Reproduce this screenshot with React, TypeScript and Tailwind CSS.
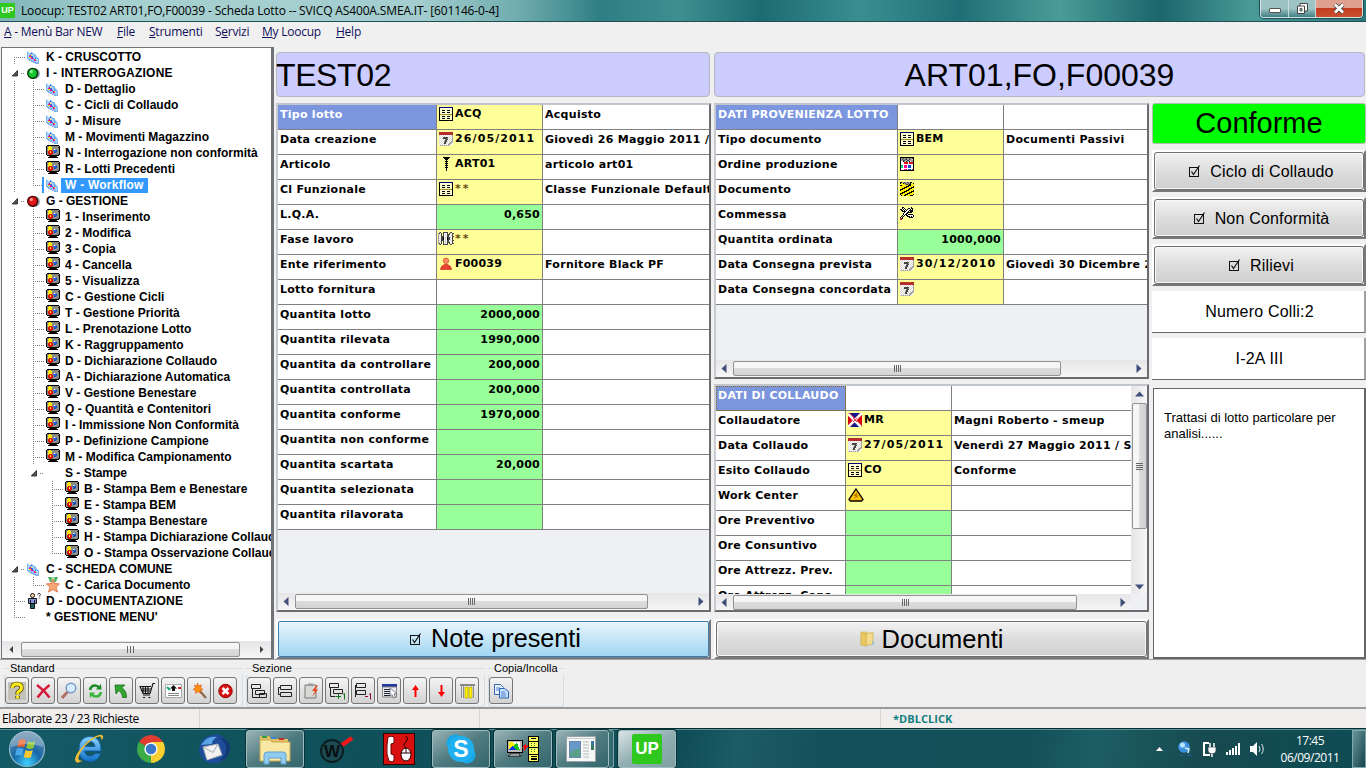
import React from "react";

type Palette = Record<string, string>;

const PALETTE: Palette = {
  k: "#000000", g: "#8b8b83", y: "#ffee00", r: "#e01010", b: "#1450d0", w: "#ffffff", l: "#c4c4c4",
  n: "#000080", d: "#444444", c: "#7fb4f0", o: "#f0a040", m: "#ff0090", e: "#00e080", t: "#b03030",
  u: "#2f6ad8", s: "#a8d4ff", p: "#d9d6cf", v: "#e8c000", a: "#9f9f9f", f: "#8888b8", h: "#108010",
  i: "#ffffd0", q: "#a09030",
};

function Pix({ rows, className = "" }: { rows: string[]; className?: string }) {
  const w = Math.max(...rows.map((r) => r.length));
  return (
    <svg width={w} height={rows.length} viewBox={`0 0 ${w} ${rows.length}`} shapeRendering="crispEdges" className={`shrink-0 ${className}`}>
      {rows.flatMap((row, y) =>
        row.split("").map((ch, x) => (ch === "." ? null : <rect key={`${x}-${y}`} x={x} y={y} width={1} height={1} fill={PALETTE[ch]} />)),
      )}
    </svg>
  );
}

const MONITOR = [
  ".kkkkkkkkkkkk.",
  "kggyyggggggggk",
  "kgyyyyggggggdk",
  "kgyyyygggggggk",
  "kgyyyyggwcgggk",
  "kgyrrrgubbbggk",
  "kgrryrrgubbggk",
  "kgrryrrgbbgggk",
  "kgrrrrrggggggk",
  "kggrrrggggggdk",
  ".kkkkkkkkkkkk.",
  "...dkkkkkkd...",
  "..kkkkkkkkkk..",
];
const NET = [
  "s...........",
  "cs..cs......",
  "csscucs.....",
  "csccssccs...",
  "cscmysscc...",
  "csmmuusccs..",
  "csyymussccs.",
  "ccscmmusuccs",
  ".ccscscmyssc",
  "..ccccsmmssc",
  "....ccccsssc",
  "......ccccsc",
  "........cccc",
];
const FORM = [
  "nnnnnnnnnnnnnn",
  "kiiiiiiiiiiiik",
  "kiiiiiiiiiiiik",
  "kiikkkiikkkiik",
  "kiiiiiiiiiiiik",
  "kiikkkiikkkiik",
  "kiiiiiiiiiiiik",
  "kqqqqqqqqqqqqk",
  "kiiiiiiiiiiiik",
  "kiikkkiikkkiik",
  "kiiiiiiiiiiiik",
  "kiikkkiikkkiik",
  "kiiiiiiiiiiiik",
  "kkkkkkkkkkkkkk",
];
const CAL = [
  "tttttttttttttt",
  "trttrttrttrttt",
  "tttttttttttttt",
  "pwpwpwpwpwpwpa",
  "wpwpwpwpwpwpwa",
  "pwpwdddddwpwpa",
  "wpwpddddapwpwa",
  "pwpwpwaddwpwpa",
  "wpwpwpddwpwpwa",
  "pwpwpaddpwpwaa",
  "wpwpwddwpwpaap",
  "pwpwpddpwpaapw",
  "wpwpwpwpwaapw.",
  "papapapapapw..",
];
const SCREW = [
  "kkkkkkk", ".kkkkk.", "..kkk..", "...k...", "..kkk..", "...k...", "..kkk..",
  "...k...", "..kkk..", "...k...", "..kkk..", "...k...", "...k...", "...k...",
];
const GRIDICON = [
  "kkkkkkkkkkkkkk", "kaadaadaadaadk", "kadaaddaadaapk", "kaaddaaddaaaak", "kwwkaadaakwaak",
  "kwwwrrrrwrrrrk", "kwwwrrrrwrrrrk", "kwwwwwwwwwwwwk", "keewmmmwbbbwwk", "keewmmmwbbbwwk",
  "keewmmmwbbbwwk", "kwwwwwwwwwwwwk", "kwwwmmmwbbbwrk", "kkkkkkkkkkkkkk",
];
const HATCH = [
  "kkaadaadaakk..", "kyykadaadakyyk", ".yyyyaddakkyyy", "kkyyyyyykkkyyy", "yyyyyykkkyyyyk",
  "yyyykkkyyyykkk", "yykkkyyyykkkyy", "kkkyyyyykkyyyy", "kyyyyykkkyyyyk", "yyyykkkyyyykkk",
  "yykkkyyyykkkyy", "kkkyyyykkkyyyy", "kyyyykkkyyyyyk", ".kyykkyyyykkk.",
];
const TOOLS = [
  "..kk.......k..", "..kwk...kk.kk.", "kk.kwk.kwwk.k.", ".kk.kwkwwkkkk.", "..kkkkwwk.kkk.",
  "....kwwkkkkk..", "...kwwkk......", "...kwkkwkkkkk.", "..kwk.kkwwwwwk", ".kvk...kkkwkwk",
  "kwk......kkkk.", "ttk...........", "tr............",
];
const GEAR = [
  ".ad..ddddd..dd..", "adpd.dwpwd.dpwdd", "apwd.dwpwdddwpd.", "awpd.dwpwddpwpd.", "apwdddwpwddwpwdd", "awpddkwpwkddpwd.",
  "apwddkwpwkddwpd.", "awpddkwpwkddpwd.", "apwdddwpwddwpwdd", "awpd.dwpwddpwpd.", "apwd.dwpwdddwpd.", "adpd.dwpwd.dpwdd", ".ad..ddddd..dd..",
];

const Person = () => (
  <svg width="14" height="14" viewBox="0 0 14 14" className="shrink-0">
    <path d="M1.500 12.500q0-3.500 4-5h3q4 1.500 4 5z" fill="#ee4030" stroke="#b02018" strokeWidth=".6" />
    <circle cx="7" cy="3.800" r="2.800" fill="#ff8a60" stroke="#c84020" strokeWidth=".6" />
  </svg>
);
const Flag = () => (
  <svg width="14" height="14" viewBox="0 0 14 14" className="shrink-0">
    <rect width="14" height="14" fill="#d80010" />
    <path d="M2 0h10L7 5zM2 14h10L7 9z" fill="#101890" />
    <path d="M0 1l13 13M14 0L0 14" stroke="#fff" strokeWidth="2.6" />
    <path d="M5 5l4 4M9 5L5 9" stroke="#e04050" strokeWidth="1" />
  </svg>
);
const Warn = () => (
  <svg width="16" height="14" viewBox="0 0 16 14" className="shrink-0">
    <path d="M8 1L15 11.5 13.5 13H2.5L1 11.5z" fill="#ffc400" stroke="#000" strokeWidth="1.300" />
    <path d="M9.500 4L5.500 8h2.500l-2 3L11 7.500H8.500z" fill="#a87000" />
  </svg>
);

const CELL_ICONS: Record<string, React.ReactNode> = {
  form: <Pix rows={FORM} />,
  cal: <Pix rows={CAL} />,
  screw: <Pix rows={SCREW} className="mx-1" />,
  gear: <Pix rows={GEAR} className="-ml-px" />,
  person: <Person />,
  grid: <Pix rows={GRIDICON} />,
  hatch: <Pix rows={HATCH} />,
  tools: <Pix rows={TOOLS} />,
  flag: <Flag />,
  warn: <Warn />,
};

/* ---------- tree ---------- */
type Icon = "net" | "mon" | "green" | "red" | "medal" | "man" | "none";
interface TreeRow { cells: string; icon: Icon; text: string; selected?: boolean }
// cells: "|" line, "+" branch, "L" last branch, "F" first branch, "v" expander, " " blank
const mon = (text: string): TreeRow => ({ cells: "|+", icon: "mon", text });
const TREE: TreeRow[] = [
  { cells: "F", icon: "net", text: "K - CRUSCOTTO" },
  { cells: "v", icon: "green", text: "I - INTERROGAZIONE" },
  { cells: "|+", icon: "net", text: "D - Dettaglio" },
  { cells: "|+", icon: "net", text: "C - Cicli di Collaudo" },
  { cells: "|+", icon: "net", text: "J - Misure" },
  { cells: "|+", icon: "net", text: "M - Movimenti Magazzino" },
  mon("N - Interrogazione non conformità"),
  mon("R - Lotti Precedenti"),
  { cells: "|L", icon: "net", text: "W - Workflow", selected: true },
  { cells: "v", icon: "red", text: "G - GESTIONE" },
  mon("1 - Inserimento"),
  mon("2 - Modifica"),
  mon("3 - Copia"),
  mon("4 - Cancella"),
  mon("5 - Visualizza"),
  mon("C - Gestione Cicli"),
  mon("T - Gestione Priorità"),
  mon("L - Prenotazione Lotto"),
  mon("K - Raggruppamento"),
  mon("D - Dichiarazione Collaudo"),
  mon("A - Dichiarazione Automatica"),
  mon("V - Gestione Benestare"),
  mon("Q - Quantità e Contenitori"),
  mon("I - Immissione Non Conformità"),
  mon("P - Definizione Campione"),
  mon("M - Modifica Campionamento"),
  { cells: "|v", icon: "none", text: "S - Stampe" },
  { cells: "| +", icon: "mon", text: "B - Stampa Bem e Benestare" },
  { cells: "| +", icon: "mon", text: "E - Stampa BEM" },
  { cells: "| +", icon: "mon", text: "S - Stampa Benestare" },
  { cells: "| +", icon: "mon", text: "H - Stampa Dichiarazione Collaudo" },
  { cells: "| L", icon: "mon", text: "O - Stampa Osservazione Collaudo" },
  { cells: "v", icon: "net", text: "C - SCHEDA COMUNE" },
  { cells: "|L", icon: "medal", text: "C - Carica Documento" },
  { cells: "+", icon: "man", text: "D - DOCUMENTAZIONE" },
  { cells: "L", icon: "none", text: "* GESTIONE MENU'" },
];

function Branch({ kind }: { kind: string }) {
  const dash = { stroke: "#808080", strokeWidth: 1, strokeDasharray: "1 1", shapeRendering: "crispEdges" as const };
  return (
    <svg width="19" height="16" viewBox="0 0 19 16" className="shrink-0 overflow-visible">
      {(kind === "|" || kind === "+") && <path d="M9.5 0V16" {...dash} />}
      {kind === "L" && <path d="M9.5 0V8" {...dash} />}
      {kind === "F" && <path d="M9.5 8V16" {...dash} />}
      {"+LF".includes(kind) && <path d="M9 8.5H20" {...dash} />}
      {kind === "v" && (
        <>
          <path d="M16 8.5H20" {...dash} />
          <path d="M12.5 5.5V11H7.2z" fill="#555" stroke="#222" strokeWidth=".8" />
        </>
      )}
    </svg>
  );
}

function Ball({ from, to }: { from: string; to: string }) {
  return (
    <svg width="13" height="13" viewBox="0 0 13 13" className="shrink-0">
      <circle cx="7.2" cy="6.5" r="5.6" fill="#7f8f98" />
      <circle cx="5.6" cy="6.3" r="4.9" fill={from} stroke={to} strokeWidth="1.4" />
      <circle cx="4.4" cy="4.6" r="1.5" fill="#fff" opacity=".6" />
    </svg>
  );
}

function TreeIcon({ icon }: { icon: Icon }) {
  switch (icon) {
    case "net": return <Pix rows={NET} />;
    case "mon": return <Pix rows={MONITOR} className="-mt-1" />;
    case "green": return <Ball from="#18c830" to="#003806" />;
    case "red": return <Ball from="#e01818" to="#480000" />;
    case "medal":
      return (
        <svg width="14" height="16" viewBox="0 0 14 16" className="shrink-0">
          <path d="M2 0h10l-2 5H4z" fill="#4caf60" />
          <path d="M5.5 0h3v5h-3z" fill="#a8e0b0" />
          <path d="M7 2.5l1.8 4 4.7.4-3.5 3.2 1.5 5L7 12.5 2.5 15.100l1.500-5L.5 6.900l4.700-.4z" fill="#f8a878" stroke="#d86838" strokeWidth=".8" />
        </svg>
      );
    case "man":
      return (
        <svg width="15" height="16" viewBox="0 0 15 16" className="shrink-0">
          <circle cx="5.500" cy="2.500" r="2" fill="#f4d4a0" stroke="#000" strokeWidth=".9" />
          <path d="M1.500 5.500h8v5h-8z" fill="#8c94d8" stroke="#000" strokeWidth=".9" />
          <path d="M3.500 7v4M7.500 7v4" stroke="#000" strokeWidth=".8" />
          <path d="M3.500 10.500h4v5h-4z" fill="#206060" stroke="#000" strokeWidth=".9" />
          <path d="M10.500 1.500q0-1 1.500-1t1.500 1q0 1-1.500 1.800M12 4.500v1" fill="none" stroke="#333" />
        </svg>
      );
    default: return null;
  }
}

function TreePanel() {
  return (
    <div className="flex h-[612px] w-[272px] shrink-0 flex-col border border-[#70737a] border-b-2 border-r-2 bg-white pt-px">
      <div className="h-[592px] shrink-0 overflow-hidden">
        {TREE.map((r, i) => (
          <div key={i} className="flex h-4 w-[600px] items-center pl-[3px]">
            {r.cells.split("").map((c, j) => <Branch key={j} kind={c} />)}
            <span className={`flex h-4 w-[22px] shrink-0 items-center ${r.selected ? "-ml-px mr-px border-l-2 border-[#3399ff] pl-[2px]" : "pl-[3px]"}`}>
              <TreeIcon icon={r.icon} />
            </span>
            <span className={`-ml-[4px] h-[15px] whitespace-pre px-1 text-[12px] font-bold leading-[15px] ${r.selected ? "bg-[#3399ff] tracking-[0.02em] text-white" : i === 1 || i === 34 ? "tracking-[0.019em]" : ""}`}>{r.text}</span>
          </div>
        ))}
      </div>
      <HScroll thumb="w-[219px]" arrow="#404040" tree />
    </div>
  );
}

/* ---------- scrollbars ---------- */
const Tri = ({ d, fill }: { d: string; fill: string }) => (
  <svg width="9" height="9" viewBox="0 0 9 9" className="shrink-0"><path d={d} fill={fill} /></svg>
);

function HScroll({ thumb, arrow = "#3f4f78", tree = false }: { thumb: string; arrow?: string; tree?: boolean }) {
  return (
    <div className={`flex h-[17px] shrink-0 items-center bg-gradient-to-b from-[#e6e6e8] to-[#f6f6f6] ${tree ? "pl-[5px] pr-[5px]" : "pl-[4px] pr-[4px]"}`}>
      <Tri d={tree ? "M6 1V8L2.500 4.500z" : "M6.500 0V9L1.500 4.500z"} fill={arrow} />
      <div className={`flex h-[15px] items-center justify-center gap-px rounded-[2px] border border-[#929292] bg-gradient-to-b from-[#f6f6f6] from-45% via-[#dcdcdc] via-50% to-[#d4d4d4] ${tree ? "ml-[5px]" : "ml-1"} ${thumb}`}>
        {(tree ? [0, 1, 2] : [0, 1, 2, 3]).map((i) => <i key={i} className={`h-[7px] w-px bg-[#666] ${tree ? "mr-px" : ""}`} />)}
      </div>
      <span className="flex-1" />
      <Tri d={tree ? "M3 1V8L6.500 4.500z" : "M2.500 0V9L7.500 4.500z"} fill={arrow} />
    </div>
  );
}

/* ---------- tables ---------- */
interface Row { label: string; icon?: string; value?: string; kind?: "y" | "g" | "w"; desc?: string; num?: boolean; stars?: boolean }

function Grid({ rows, labelW, focus = false }: { rows: Row[]; labelW: string; focus?: boolean }) {
  return (
    <div className="shrink-0 font-['DejaVu_Sans',sans-serif] text-[11px] font-bold leading-[20px] text-black">
      {rows.map((r, i) => (
        <div key={i} className="flex h-[25px] w-[700px]">
          <div className={`shrink-0 overflow-hidden whitespace-pre border-b border-r border-[#808080] pl-[2px] tracking-[0.024em] ${labelW} ${i === 0 ? "bg-[#7b96de] text-white" : "bg-white"} ${i === 0 && focus ? "outline-1 -outline-offset-1 outline-dotted outline-[#84691f]" : ""}`}>
            {r.label}
          </div>
          <div className={`flex w-[106px] shrink-0 overflow-hidden whitespace-pre border-b border-r border-[#808080] ${r.kind === "y" ? "bg-[#ffff99]" : r.kind === "g" ? "bg-[#99ff99]" : "bg-white"}`}>
            {r.icon && <span className="flex w-[18px] shrink-0 items-start pl-[2px] pt-[2px]">{CELL_ICONS[r.icon]}</span>}
            <span className={r.num ? "flex-1 pr-[2px] text-right tracking-[0.022em]" : r.stars ? "-mt-px tracking-[0.18em] text-[#6b4a10]" : r.icon === "cal" ? "-mt-px tracking-[0.1em]" : "-mt-px tracking-[0.02em]"}>{r.value}</span>
          </div>
          <div className="flex-1 whitespace-pre border-b border-[#808080] bg-white pl-[2px] tracking-[0.026em]">{r.desc}</div>
        </div>
      ))}
    </div>
  );
}

const LOT: Row[] = [
  { label: "Tipo lotto", icon: "form", value: "ACQ", kind: "y", desc: "Acquisto" },
  { label: "Data creazione", icon: "cal", value: "26/05/2011", kind: "y", desc: "Giovedì 26 Maggio 2011 /" },
  { label: "Articolo", icon: "screw", value: "ART01", kind: "y", desc: "articolo art01" },
  { label: "Cl Funzionale", icon: "form", value: "**", kind: "y", desc: "Classe Funzionale Default", stars: true },
  { label: "L.Q.A.", value: "0,650", kind: "g", num: true },
  { label: "Fase lavoro", icon: "gear", value: "**", kind: "y", stars: true },
  { label: "Ente riferimento", icon: "person", value: "F00039", kind: "y", desc: "Fornitore Black PF" },
  { label: "Lotto fornitura", kind: "w" },
  { label: "Quantita lotto", value: "2000,000", kind: "g", num: true },
  { label: "Quantita rilevata", value: "1990,000", kind: "g", num: true },
  { label: "Quantita da controllare", value: "200,000", kind: "g", num: true },
  { label: "Quantita controllata", value: "200,000", kind: "g", num: true },
  { label: "Quantita conforme", value: "1970,000", kind: "g", num: true },
  { label: "Quantita non conforme", kind: "g" },
  { label: "Quantita scartata", value: "20,000", kind: "g", num: true },
  { label: "Quantita selezionata", kind: "g" },
  { label: "Quantita rilavorata", kind: "g" },
];
const ORIGIN: Row[] = [
  { label: "DATI PROVENIENZA LOTTO" },
  { label: "Tipo documento", icon: "form", value: "BEM", kind: "y", desc: "Documenti Passivi" },
  { label: "Ordine produzione", icon: "grid", kind: "y" },
  { label: "Documento", icon: "hatch", kind: "y" },
  { label: "Commessa", icon: "tools", kind: "y" },
  { label: "Quantita ordinata", value: "1000,000", kind: "g", num: true },
  { label: "Data Consegna prevista", icon: "cal", value: "30/12/2010", kind: "y", desc: "Giovedì 30 Dicembre 2" },
  { label: "Data Consegna concordata", icon: "cal", kind: "y" },
];
const TESTING: Row[] = [
  { label: "DATI DI COLLAUDO" },
  { label: "Collaudatore", icon: "flag", value: "MR", kind: "y", desc: "Magni Roberto - smeup" },
  { label: "Data Collaudo", icon: "cal", value: "27/05/2011", kind: "y", desc: "Venerdì 27 Maggio 2011 / S" },
  { label: "Esito Collaudo", icon: "form", value: "CO", kind: "y", desc: "Conforme" },
  { label: "Work Center", icon: "warn", kind: "y" },
  { label: "Ore Preventivo", kind: "g" },
  { label: "Ore Consuntivo", kind: "g" },
  { label: "Ore Attrezz. Prev.", kind: "g" },
  { label: "Ore Attrezz. Cons.", kind: "g" },
];

const PANEL = "flex flex-col overflow-hidden border-b-2 border-r-2 border-b-[#6a6c72] border-r-[#6a6c72] border-l-2 border-t-2 border-l-[#c8ccd2] border-t-[#c0c6cc] bg-[#eff0f3]";

const Check = () => (
  <svg width="13" height="13" viewBox="0 0 13 13" className="shrink-0">
    <rect x="1.500" y="2.500" width="9" height="9" fill="none" stroke="#111" />
    <path d="M3.500 6.500l2 3L11.500.5" fill="none" stroke="#111" strokeWidth="1.200" />
  </svg>
);

const BTN = "flex flex-1 items-center justify-center rounded-[3px] border border-[#707070] bg-gradient-to-b from-[#f2f2f2] from-0% via-[#dddddd] via-50% to-[#cfcfcf] shadow-[inset_0_0_0_1px_#f8f8f8]";
const FRAME = "flex border-b-2 border-r-2 border-[#77777c] border-l-2 border-l-white border-t-2 border-t-white";

function SideButton({ text }: { text: string }) {
  return (
    <div className={`h-[42px] ${FRAME}`}>
      <div className={`${BTN} gap-[9px] pl-1 pt-px text-[16px] tracking-[0.012em]`}><Check /> {text}</div>
    </div>
  );
}

function SideLabel({ text }: { text: string }) {
  return <div className="flex h-[42px] items-center justify-center border-b border-r-2 border-b-[#66666a] border-r-[#a0a0a4] bg-white pl-[3px] text-[16px] tracking-[0.012em]">{text}</div>;
}

/* ---------- toolbar ---------- */
const toolIcons: Record<string, React.ReactNode> = {
  help: <><rect x="0" y="1" width="18" height="18" fill="#c4c2b8" /><path d="M4.500 7q-.5-4 4.500-4t4.500 4q0 2-2.500 3.200Q9.500 11 9.500 13.500M9.500 15v2.500" fill="none" stroke="#635a00" strokeWidth="4.600" /><path d="M4.500 7q-.5-4 4.500-4t4.500 4q0 2-2.500 3.200Q9.500 11 9.500 13.500M9.500 15v2.500" fill="none" stroke="#ffee20" strokeWidth="2.800" /></>,
  x: <path d="M3 4Q10 9 15.500 16.500M15.500 4Q8 10 3.500 16.500" fill="none" stroke="#d81838" strokeWidth="2.400" />,
  lens: <><path d="M7.500 11L2 17" stroke="#b07060" strokeWidth="3" /><circle cx="11" cy="7" r="4.800" fill="#d4ecff" stroke="#7898c8" strokeWidth="1.400" /></>,
  refresh: <><path d="M4 9q1-4.500 5-4.500 2.500 0 4 2" fill="none" stroke="#1c8c20" strokeWidth="2.600" /><path d="M10 8.500l5.500 0-.5-5.500z" fill="#1c8c20" /><path d="M15 11q-1 4.500-5 4.500-2.500 0-4-2" fill="none" stroke="#38b838" strokeWidth="2.600" /><path d="M9 11.500H3.500l.5 5.500z" fill="#38b838" /></>,
  arrow: <path d="M3 4h10l-3 2.500q5 4 4.500 10h-4q0-4-3.500-7L4 13z" fill="#30a830" stroke="#106010" strokeWidth=".7" />,
  cart: <path d="M17 2.500h-2l-3 10H5L2 5.500h11M4 8h9M5 10h7M5 5v7M7.500 5v7M10 5v7M5 14h7M5 16.500h2M10.500 16.500h2" fill="none" stroke="#111" strokeWidth="1.100" />,
  card: <><path d="M1.500 3.500h16v13h-16z" fill="#fff" stroke="#aaa" /><path d="M9.500 4l3.500 3.500h-2V10H8V7.500H6z" fill="#111" /><path d="M3 6l3 3" stroke="#10a080" strokeWidth="2" /><path d="M14 7h3" stroke="#d02030" strokeWidth="2" /><path d="M4 12.500h11M4 14.500h11" stroke="#888" /></>,
  wand: <><path d="M9 9l7 8" stroke="#8a6a50" strokeWidth="2.200" /><path d="M7.500 2l1 3 3-1-1 3 2.500 1.500-3 1 .5 3-2.500-2-2.500 2 .3-3-2.800-1L5.500 7l-1-3 2.500 1z" fill="#ff9010" stroke="#e05000" strokeWidth=".6" /></>,
  stop: <><circle cx="9.500" cy="10" r="6.700" fill="#d81010" stroke="#900" /><path d="M6.500 7l6 6M12.500 7l-6 6" stroke="#fff" strokeWidth="2.600" /></>,
  tree: <path d="M1.500 3.500h9v4h-9zM5.500 9.500h9v4h-9zM9.500 12.500h7v4h-7zM2.500 7.500v9h7" fill="none" stroke="#222" />,
  split: <path d="M4.500 4.500h11v4h-11zM4.500 11.500h11v4h-11zM4 6.500H2.500v7h1.500" fill="none" stroke="#222" />,
  clip: <><path d="M3 4h11v13H3z" fill="#d8d8d4" stroke="#777" /><path d="M6 2.500h5V5H6z" fill="#999" /><path d="M15 4l-5 6h3l-3 6 6-7.500h-3l3-4z" fill="#f04010" /></>,
  plus: <><path d="M1.500 2.500h9v4h-9zM5.500 8.500h9v4h-9zM2.500 6.500v9h5" fill="none" stroke="#222" /><path d="M8 15.500h5M10.500 13v5M15 13.500l1.500-1v6" fill="none" stroke="#107818" /></>,
  minus: <><path d="M2.500 2.500h9v4h-9zM2.500 9.500h9v4h-9zM1.500 4v12" fill="none" stroke="#222" /><path d="M11 15.500h3M15 13.500l1.500-1v6" fill="none" stroke="#901020" /></>,
  list: <><path d="M2 3h15v3H2z" fill="#2038a0" /><path d="M2.500 6h14v10h-14z" fill="#e8ecf4" stroke="#888" /><path d="M4 8.500h7M4 10.500h7M4 12.500h7M4 14.500h7" stroke="#223" /><path d="M10 7l7 6h-3l1.500 3.500-2 .5-1.500-3.500L10 15z" fill="#fff" stroke="#667" strokeWidth=".8" /></>,
  up: <path d="M9.500 4L13 9h-2.500v7h-2V9H6z" fill="#f00" />,
  down: <path d="M9.500 16L13 11h-2.500V4h-2v7H6z" fill="#f00" />,
  cols: <><path d="M2 3h15v2H2z" fill="#888" /><path d="M3.500 5v12M5.500 5v12M15.500 5v12" stroke="#909090" /><path d="M7 6h3v11H7zM11 6h3v11h-3z" fill="#fff000" stroke="#b0a000" strokeWidth=".6" /></>,
  copy: <><path d="M2.500 3.500h6l3 3v7h-9z" fill="#e8f4ff" stroke="#3868b8" /><path d="M7.500 7.500h5l4 3v6.500h-9z" fill="#c4e0ff" stroke="#3060b0" /><path d="M4 7h4M4 9h3M9 11h4M9 13h5M9 15h5" stroke="#5080c8" /></>,
};

function ToolGroup({ title, icons, width }: { title: string; icons: string[]; width: string }) {
  return (
    <div className={`flex shrink-0 flex-col ${width}`}>
      <div className="flex h-[14px] items-center text-[11px]">
        <span className="h-px w-[5px] bg-[#d4dfe8]" />
        <span className="h-[14px] px-px leading-[14px]">{title}</span>
        <span className="h-px flex-1 bg-[#d4dfe8]" />
      </div>
      <div className="flex h-[33px] gap-[2px] rounded-b-[3px] border border-t-0 border-[#d4dfe8] pl-0 pt-[2px]">
        {icons.map((ic) => (
          <div key={ic} className="flex h-[27px] w-6 shrink-0 items-center justify-center rounded-[3px] border border-[#777] bg-gradient-to-b from-[#f4f4f4] to-[#d2d2d2]">
            <svg width="19" height="20" viewBox="0 0 19 20" className="shrink-0">{toolIcons[ic]}</svg>
          </div>
        ))}
      </div>
    </div>
  );
}

/* ---------- taskbar ---------- */
const TB = "flex h-[38px] w-[58px] shrink-0 items-center justify-center rounded-[3px] border border-[#9dbcc0] bg-gradient-to-br from-[#9ab4b7] via-[#4f7b80] to-[#33666c] shadow-[0_0_0_1px_#0a3338]";

function Orb() {
  return (
    <svg width="38" height="38" viewBox="0 0 38 38">
      <defs><radialGradient id="orb" cx=".5" cy=".9" r=".8"><stop offset="0" stopColor="#40d0ff" /><stop offset=".5" stopColor="#1668a8" /><stop offset="1" stopColor="#5a86a8" /></radialGradient></defs>
      <circle cx="19" cy="19" r="17.500" fill="url(#orb)" stroke="#8fb4c8" strokeWidth="1.200" />
      <path d="M11 10q4-2 7 0l-1.800 7.500q-3.500-2-7 0z" fill="#e8602c" />
      <path d="M20 11q3.500 2 7.500 0l-2 7q-3.500 2-7.300 0z" fill="#8cc63e" />
      <path d="M8.500 19q3.500-2 7 0L14 26q-3.500-2-7 0z" fill="#4aa8e8" />
      <path d="M17.500 20q3.500 2 7.300 0L23 27q-3.500 2-7.200 0z" fill="#f8c830" />
      <path d="M3 17A16 16 0 0 1 35 17Q19 11 3 17z" fill="#fff" opacity=".28" />
    </svg>
  );
}

const IE = () => (
  <svg width="34" height="34" viewBox="0 0 34 34">
    <defs><linearGradient id="ie" x1="0" y1="0" x2="0" y2="1"><stop offset="0" stopColor="#88d4ff" /><stop offset="1" stopColor="#1070c8" /></linearGradient></defs>
    <path d="M29 19H12.500q1 5 5.500 5 3.500 0 5-2.500h5.500q-2.500 8-10.500 8-11-.5-11-12.500t11-12.500q11.500.5 11 14.500zM12.500 14.500h10.500q-.8-5-5.200-5t-5.300 5z" fill="url(#ie)" stroke="#1058a8" strokeWidth=".8" />
    <path d="M31 6q1-4-4-3-7 2-14 9Q3 22 3 28q1 5 8 .5-5 1-4.500-3Q8 19 15 12 24 4 28 4.500q2 .5 1 4z" fill="#f0bc38" />
  </svg>
);
const Chrome = () => (
  <svg width="30" height="30" viewBox="0 0 30 30">
    <path d="M15 15L2.900 8A14 14 0 0 1 27.100 8z" fill="#e03c30" />
    <path d="M15 15L2.900 8A14 14 0 0 0 15 29z" fill="#3cac48" />
    <path d="M15 8h12.100A14 14 0 0 1 15 29l6-11z" fill="#fcd030" />
    <path d="M8.900 18.500L15 29l6-11z" fill="#3cac48" />
    <path d="M15 29l6.500-11L15 15z" fill="#fcd030" />
    <circle cx="15" cy="15" r="6.600" fill="#fff" /><circle cx="15" cy="15" r="5.300" fill="#3c78c8" />
  </svg>
);
const Bird = () => (
  <svg width="34" height="32" viewBox="0 0 34 32">
    <path d="M3 13Q5 3 16 2q3-2 7 0 9 5 9 14 0 10-11 14Q10 32 5 25 0 19 3 13z" fill="#1f4c98" />
    <path d="M4 12Q10 2 20 4q-5 3-5 7z" fill="#58a4e4" />
    <path d="M22 4q8 6 7 13-1 8-8 11 10-2 12-11Q34 7 22 4z" fill="#123878" />
    <path d="M6 14l15-3 4 11-15 5z" fill="#f4f2f0" stroke="#a8b0c0" /><path d="M6 14l10 5.500L21 11" fill="none" stroke="#a0a8b4" />
  </svg>
);
const Folder = () => (
  <svg width="34" height="32" viewBox="0 0 34 32">
    <path d="M2 3h9l2 3h17v20H2z" fill="#e4c060" /><path d="M4 3h5v2H4z" fill="#30a040" /><path d="M13 4h5v2h-5z" fill="#3880d8" /><path d="M21 5h5v2h-5z" fill="#c83030" />
    <path d="M2 7h10l2 2h18v19H2z" fill="#f8e8a4" stroke="#c8a850" />
    <path d="M6 31V22q0-3 3-3h16q3 0 3 3v9h-5v-6H11v6z" fill="#90ccf0" stroke="#60a0d0" />
  </svg>
);
const WIcon = () => (
  <svg width="36" height="34" viewBox="0 0 36 34">
    <circle cx="14" cy="19" r="11" fill="#1b4a50" stroke="#0c1c20" strokeWidth="1.800" />
    <text x="14" y="25" textAnchor="middle" fontSize="17" fontWeight="bold" fontFamily="Liberation Sans, sans-serif" fill="#081014">W</text>
    <path d="M24 13l10-7" stroke="#f01818" strokeWidth="4.500" />
  </svg>
);
const Phone = () => (
  <svg width="32" height="32" viewBox="0 0 32 32">
    <rect x=".5" y=".5" width="31" height="31" fill="#d81010" stroke="#300" />
    <path d="M5 4q5-2 6 1v5l-3 1v10l3 1v5q-1 3-5 1Q3 22 4 12z" fill="#fff" stroke="#600" />
    <ellipse cx="23" cy="21.500" rx="5" ry="6.500" fill="#fff" stroke="#200" /><path d="M18 20h10M23 15v5M23 15q-4-3 0-6 3-3 0-6" fill="none" stroke="#200" />
  </svg>
);
const Skype = () => (
  <svg width="30" height="30" viewBox="0 0 30 30">
    <circle cx="9" cy="9" r="8.500" fill="#18a8e8" /><circle cx="21" cy="21" r="8.500" fill="#18a8e8" /><circle cx="15" cy="15" r="13" fill="#20b0f0" />
    <text x="15" y="23" textAnchor="middle" fontSize="23" fontWeight="bold" fontFamily="Liberation Sans, sans-serif" fill="#fff">S</text>
  </svg>
);
const Terminal = () => (
  <svg width="32" height="28" viewBox="0 0 32 28" shapeRendering="crispEdges">
    <path d="M0 5h15v12H0z" fill="#bbb" stroke="#000" /><path d="M2 7h11v8H2z" fill="#fff" /><path d="M2 7h4l3 4-7 3z" fill="#ffee00" /><path d="M6 11l4-3 3 7H6z" fill="#10c020" /><path d="M2 15l3-4 4 4z" fill="#1030f0" />
    <path d="M3 18h9v2h2v1H1v-1h2z" fill="#999" stroke="#222" strokeWidth=".6" />
    <path d="M15 13l3-3v4l3-4" fill="none" stroke="#f00" strokeWidth="1.300" />
    <path d="M21.500 1.500h10v25h-10z" fill="#ffff60" stroke="#000" strokeWidth="1.500" />
    <path d="M22 6h9M22 12h9M22 19h9" stroke="#000" />
    <path d="M24 3.500h5M24 21.500h6M24 24h6" stroke="#000" strokeWidth="1.500" />
    <path d="M24 8h6M24 10h6M24 14.500h6M24 16.500h6" stroke="#208020" strokeDasharray="1 2" />
  </svg>
);
const AppWin = () => (
  <svg width="30" height="26" viewBox="0 0 30 26">
    <rect x=".5" y=".5" width="29" height="25" fill="#f6f8f8" stroke="#98a4a8" /><path d="M1 2.500h28" stroke="#c8ccd0" />
    <rect x="3.500" y="5.500" width="11" height="16" fill="#58a088" stroke="#6888b0" /><path d="M4 6h10v6L4 16z" fill="#6898c8" />
    <path d="M17 6h6M17 9h6M17 12h6M17 15h6M17 18h6M17 21h6" stroke="#b8b8b8" /><path d="M25 5h3v4h-3z" fill="#3878a8" /><path d="M25 9h3v5h-3z" fill="#38785c" />
  </svg>
);

const UpLogo = ({ className }: { className: string }) => (
  <span className={`flex shrink-0 items-center justify-center bg-[#2fc81e] font-bold text-white ${className}`}>UP</span>
);

function MenuItem({ accel, pre = "", post, w }: { accel: string; pre?: string; post: string; w: string }) {
  return <span className={`shrink-0 whitespace-pre ${w}`}>{pre}<u className="underline-offset-1">{accel}</u>{post}</span>;
}

const UI = "font-['Open_Sans','Noto_Sans',sans-serif]";

export default function App() {
  return (
    <div className="flex h-[768px] w-[1366px] flex-col overflow-hidden bg-[#f0f0f0] font-['Liberation_Sans',Arial,sans-serif] text-black">
      {/* title bar */}
      <header className={`flex h-[22px] shrink-0 items-start border-b border-[#1d4f54] bg-[linear-gradient(90deg,#7fb5b8_0px,#a6cfd0_120px,#a3cdce_420px,#6fabae_520px,#2e7f84_600px,#3d8f90_680px,#1c6c72_760px,#3a8e90_860px,#1f7076_960px,#4b9c98_1060px,#1a666c_1160px,#4a9a98_1250px,#2a787c_1366px)] ${UI}`}>
        <UpLogo className="mt-[3px] h-[15px] w-[15px] font-['Liberation_Sans',sans-serif] text-[9px]" />
        <span className="ml-[6px] mt-[2px] whitespace-pre text-[12px] leading-[17px] tracking-[-0.012em]">Loocup: TEST02 ART01,FO,F00039 - Scheda Lotto -- SVICQ AS400A.SMEA.IT- [601146-0-4]</span>
        <span className="flex-1" />
        <div className="mr-[3px] flex h-[18px] overflow-hidden rounded-b-[4px] border border-t-0 border-[#d4e4e4] shadow-[0_0_0_1px_#1d4f54]">
          <span className="flex w-[28px] items-end justify-center border-r border-[#c8dcdc] bg-gradient-to-b from-[#9dc3c4] from-50% to-[#3d7f84] pb-[4px]"><i className="h-[5px] w-[12px] rounded-[1px] border border-[#555] bg-white" /></span>
          <span className="flex w-[27px] items-center justify-center border-r border-[#c8dcdc] bg-gradient-to-b from-[#9dc3c4] from-50% to-[#3d7f84]">
            <svg width="13" height="13" viewBox="0 0 13 13"><path d="M4 1.500h7.500V9H4z" fill="#fff" stroke="#444" /><path d="M1.500 4h7v7.500h-7z" fill="#fff" stroke="#444" /><path d="M4 6.500h2v2.500H4z" fill="#8aa" stroke="#444" strokeWidth=".8" /></svg>
          </span>
          <span className="flex w-[46px] items-center justify-center bg-gradient-to-b from-[#e0a090] from-45% via-[#c43c20] via-50% to-[#c85030]">
            <svg width="12" height="11" viewBox="0 0 12 11"><path d="M2 1.500l8 8M10 1.500l-8 8" stroke="#444" strokeWidth="4.200" /><path d="M2 1.500l8 8M10 1.500l-8 8" stroke="#fff" strokeWidth="2.600" /></svg>
          </span>
        </div>
      </header>

      {/* menu */}
      <nav className={`flex h-[25px] shrink-0 pl-1 pt-[1px] text-[12px] leading-[18px] tracking-[-0.02em] text-[#10105c] ${UI}`}>
        <MenuItem accel="A" post=" - Menù Bar NEW" w="w-[113px]" />
        <MenuItem accel="F" post="ile" w="w-[32px]" />
        <MenuItem accel="S" post="trumenti" w="w-[66px]" />
        <MenuItem pre="S" accel="e" post="rvizi" w="w-[47px]" />
        <MenuItem accel="M" post="y Loocup" w="w-[74px]" />
        <MenuItem accel="H" post="elp" w="w-[40px]" />
      </nav>

      {/* work area */}
      <div className="flex h-[613px] shrink-0 border-b border-[#a0a0a0] pl-px">
        <TreePanel />
        <main className="flex flex-1 flex-col border-l border-[#70737a] pl-[2px] pt-[5px]">
          <div className="flex h-[45px] shrink-0 gap-[4px]">
            <div className="flex w-[434px] items-center rounded-[4px] border border-[#b8b8c0] bg-[#ccccff] text-[32px] tracking-[-0.012em]"><span className="-ml-px">TEST02</span></div>
            <div className="flex w-[651px] items-center justify-center rounded-[4px] border border-[#b8b8c0] bg-[#ccccff] text-[32px]">ART01,FO,F00039</div>
          </div>
          <div className="mt-[6px] flex gap-[3px]">
            <section className="flex w-[435px] shrink-0 flex-col">
              <div className={`h-[509px] ${PANEL}`}>
                <Grid rows={LOT} labelW="w-[159px]" />
                <span className="flex-1" />
                <HScroll thumb="w-[353px]" />
              </div>
              <div className={`mt-[7px] h-[40px] ${FRAME}`}>
                <div className="flex flex-1 items-center justify-center gap-[9px] rounded-[2px] border border-[#3c7fb1] bg-gradient-to-b from-[#e8f5fd] from-0% via-[#c4e5f6] via-50% to-[#a2d6f4] pl-[3px] text-[25.2px]"><Check /> Note presenti</div>
              </div>
            </section>
            <section className="flex w-[435px] shrink-0 flex-col">
              <div className={`h-[276px] ${PANEL}`}>
                <Grid rows={ORIGIN} labelW="w-[182px]" />
                <span className="flex-1" />
                <HScroll thumb="w-[328px]" />
              </div>
              <div className={`mt-[5px] h-[228px] ${PANEL} !flex-row`}>
                <div className="flex w-[415px] flex-col overflow-hidden">
                  <div className="h-[208px] shrink-0 overflow-hidden"><Grid rows={TESTING} labelW="w-[130px]" focus /></div>
                  <HScroll thumb="w-[344px]" />
                </div>
                <div className="flex h-[208px] flex-1 flex-col items-center bg-gradient-to-r from-[#e6e6e8] to-[#f6f6f6] pb-[3px] pt-[4px]">
                  <Tri d="M0 6.500H9L4.500 1.500z" fill="#3f4f78" />
                  <div className="mt-[4px] flex h-[126px] w-[15px] flex-col items-center justify-center gap-px rounded-[2px] border border-[#929292] bg-gradient-to-r from-[#f6f6f6] from-45% via-[#dcdcdc] via-50% to-[#d0d0d4]">
                    {[0, 1, 2, 3].map((i) => <i key={i} className="h-px w-[7px] bg-[#666]" />)}
                  </div>
                  <span className="flex-1" />
                  <Tri d="M0 2.500H9L4.500 7.500z" fill="#3f4f78" />
                </div>
              </div>
              <div className={`mt-[7px] h-[40px] ${FRAME}`}>
                <div className={`${BTN} gap-[8px] text-[25.5px]`}>
                  <svg width="14" height="16" viewBox="0 0 14 16"><path d="M1 1h6v13H1z" fill="#f0d478" stroke="#d0b050" strokeWidth=".6" /><path d="M6 2.500l7-1v11.500l-7 1.500z" fill="#f4dc8c" stroke="#c8a440" strokeWidth=".6" /><path d="M1 1.500l5 1.500v12L1 13.500z" fill="#ecc960" stroke="#c8a440" strokeWidth=".5" /><path d="M13 10v4" stroke="#70b8e8" /></svg>
                  Documenti
                </div>
              </div>
            </section>
            <aside className="flex w-[214px] shrink-0 flex-col">
              <div className="flex h-[41px] shrink-0 items-center justify-center rounded-[3px] border border-[#b0c0b0] bg-[#00ff00] text-[29px]">Conforme</div>
              <div className="mt-[6px] flex flex-col gap-[5px]">
                <SideButton text="Ciclo di Collaudo" />
                <SideButton text="Non Conformità" />
                <SideButton text="Rilievi" />
                <SideLabel text="Numero Colli:2" />
                <SideLabel text="I-2A III" />
              </div>
              <div className="ml-px mt-[8px] h-[271px] border border-r-2 border-b-2 border-[#66666a] bg-white pl-[10px] pr-4 pt-[21px] text-[13px] leading-4">
                Trattasi di lotto particolare per<br />analisi......
              </div>
            </aside>
          </div>
        </main>
      </div>

      {/* toolbar */}
      <div className="flex h-[49px] shrink-0 gap-[3px] border-b-2 border-[#9a9a9a] bg-[#efefef] pl-1 pt-px">
        <ToolGroup title="Standard" width="w-[239px]" icons={["help", "x", "lens", "refresh", "arrow", "cart", "card", "wand", "stop"]} />
        <ToolGroup title="Sezione" width="w-[239px]" icons={["tree", "split", "clip", "plus", "minus", "list", "up", "down", "cols"]} />
        <ToolGroup title="Copia/Incolla" width="w-[76px]" icons={["copy"]} />
      </div>

      {/* status bar */}
      <div className={`flex h-[19px] shrink-0 bg-[#f1eded] text-[12px] leading-[20px] tracking-[-0.034em] ${UI}`}>
        <span className="w-[200px] border-r border-[#d8d4d4] pl-[2px]">Elaborate 23 / 23 Richieste</span>
        <span className="w-[280px] border-r border-[#d8d4d4]" />
        <span className="w-[401px] border-r border-[#d8d4d4]" />
        <span className="pl-[12px] text-[11px] font-bold tracking-[0.005em] text-[#108080]">*DBLCLICK</span>
      </div>

      {/* taskbar */}
      <footer className="flex h-[40px] shrink-0 items-center border-t border-[#062c30] bg-[linear-gradient(100deg,#145a64_0%,#0f525c_20%,#0f4e56_50%,#1c5c66_54%,#13505a_60%,#135058_75%,#1c5e64_80%,#164a50_88%,#0e4c54_100%)] shadow-[inset_0_1px_0_#5b9198]">
        <span className="flex w-[58px] justify-center pr-[4px]"><Orb /></span>
        <span className="flex w-[62px] justify-center"><IE /></span>
        <span className="flex w-[62px] justify-center"><Chrome /></span>
        <span className="flex w-[64px] justify-center"><Bird /></span>
        <span className={TB}><Folder /></span>
        <span className="flex w-[64px] justify-center"><WIcon /></span>
        <span className="flex w-[64px] justify-center pr-[2px]"><Phone /></span>
        <span className={TB}><Skype /></span>
        <span className={`ml-1 ${TB}`}><Terminal /></span>
        <span className={`ml-1 ${TB} !w-[53px] pr-1`}><AppWin /></span>
        <span className="h-[38px] w-[5px] rounded-r-[3px] border border-l-0 border-[#7fa2a6] bg-[#336a70]" />
        <span className={`ml-1 ${TB} !from-[#dbe5e6] !via-[#91aeb1] !to-[#7e9fa3]`}><UpLogo className="h-[30px] w-[30px] rounded-[2px] text-[17px]" /></span>
        <span className="flex-1" />
        <svg width="9" height="6" viewBox="0 0 9 6" className="mr-[13px]"><path d="M4.500 1L8 5H1z" fill="#fff" /></svg>
        <svg width="16" height="18" viewBox="0 0 16 18" className="mr-[8px]"><circle cx="7" cy="7" r="5.800" fill="#3c90e0" /><circle cx="5.500" cy="5" r="2.600" fill="#b8e0ff" /><path d="M8 8l4 1-1 4" stroke="#d8f0ff" strokeWidth="1.500" fill="none" /><path d="M3 14q5 4 10 0l1 2H4z" fill="#2060a8" /></svg>
        <svg width="16" height="18" viewBox="0 0 16 18" className="mr-[8px]"><path d="M2 3h6M3 4v11h6" fill="none" stroke="#fff" strokeWidth="2" /><path d="M7 7h8v4q-1 3-4 3t-4-3z" fill="#fff" stroke="#234" strokeWidth=".7" /><path d="M9 3v4M13 3v4M11 14v3" stroke="#fff" strokeWidth="1.500" /></svg>
        <svg width="17" height="14" viewBox="0 0 17 14" className="mr-[7px]" shapeRendering="crispEdges"><path d="M1 10h2v3H1zM4 8h2v5H4zM7 6h2v7H7zM10 4h2v9h-2zM13 1h2v12h-2z" fill="#fff" /></svg>
        <svg width="16" height="16" viewBox="0 0 16 16" className="mr-[15px]"><path d="M1 5h3l4-4v14l-4-4H1z" fill="#fff" /><path d="M10 5q2 3 0 6M12.500 3q3.500 5 0 10" fill="none" stroke="#d8e8e8" /></svg>
        <div className={`w-[60px] whitespace-nowrap text-center text-[12px] leading-[17px] tracking-[-0.04em] text-white ${UI}`}><div>17:45</div><div>06/09/2011</div></div>
        <span className="ml-[12px] h-[38px] w-[14px] border border-[#7fa8ac] bg-gradient-to-br from-[#6a959a] to-[#0f454c]" />
      </footer>
    </div>
  );
}
